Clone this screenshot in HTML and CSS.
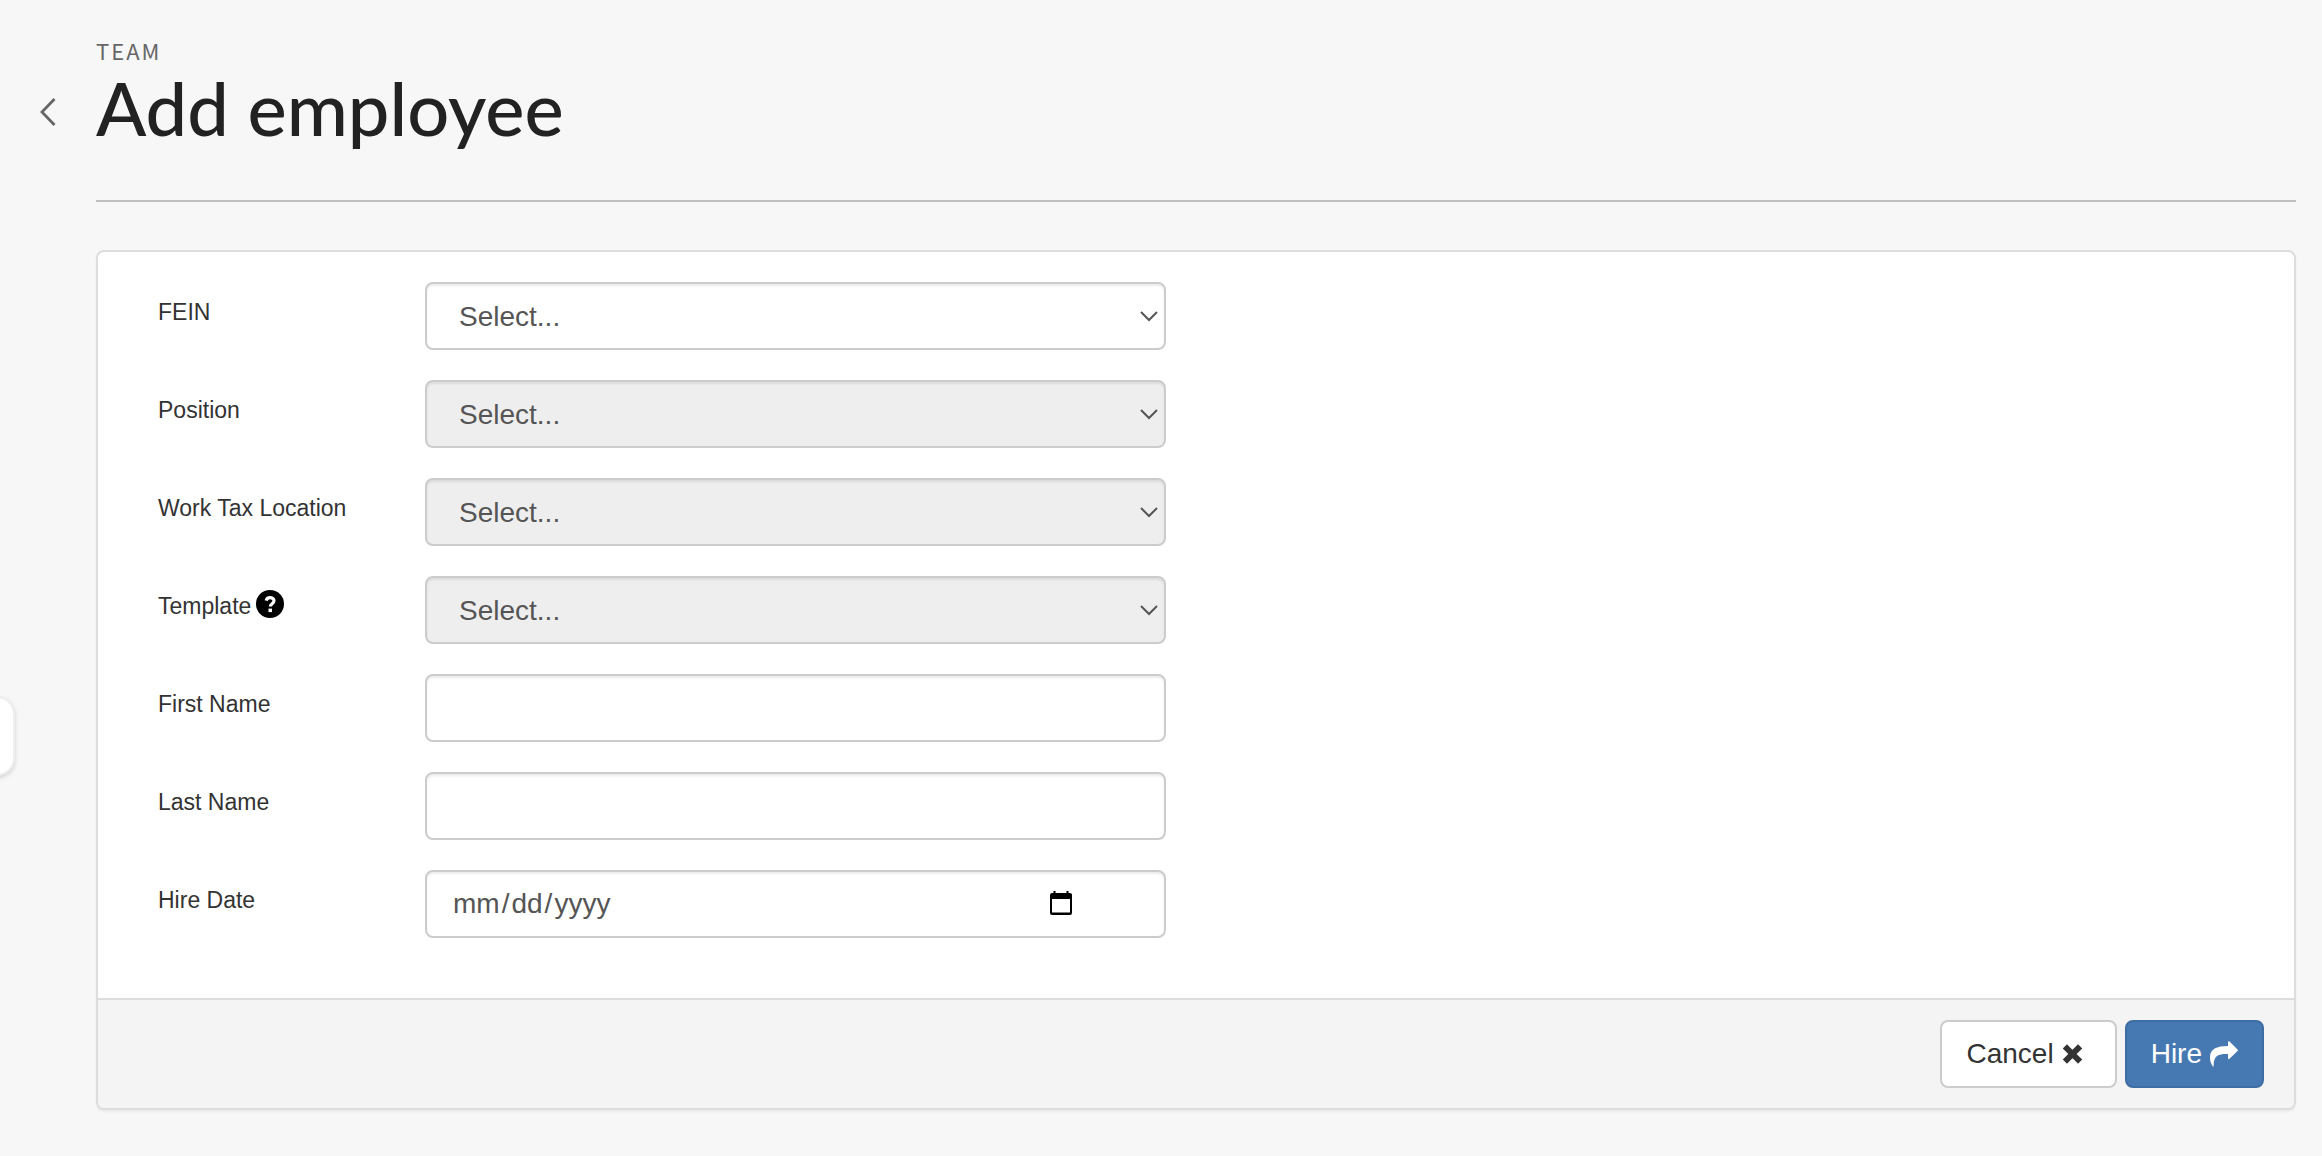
FILE: index.html
```html
<!DOCTYPE html>
<html lang="en">
<head>
    <meta charset="UTF-8">
    <meta name="viewport" content="width=device-width, initial-scale=1.0">
    <title>Add employee</title>
    <link rel="stylesheet" href="styles.css">
</head>
<body>
    <button type="button" class="side-tab" aria-label="Open menu"></button>
    <header class="page-header">
        <a href="#" class="back" aria-label="Back">
            <svg width="16" height="28" viewBox="0 0 16 28"><path d="M14.500 1 2 14l12.500 13" fill="none" stroke="#666" stroke-width="2.800"/></svg>
        </a>
        <div class="heading">
            <p class="section">TEAM</p>
            <h1>Add employee</h1>
        </div>
    </header>
    <main>
        <form class="panel">
            <div class="panel-body">
                <div class="form-row">
                    <label for="fein">FEIN</label>
                    <div class="field">
                        <select id="fein"><option>Select...</option></select>
                        <svg class="chevron" width="18" height="11" viewBox="0 0 18 11"><path d="M1 1l8 8 8-8" fill="none" stroke="#555" stroke-width="2"/></svg>
                    </div>
                </div>
                <div class="form-row">
                    <label for="position">Position</label>
                    <div class="field">
                        <select id="position" disabled><option>Select...</option></select>
                        <svg class="chevron" width="18" height="11" viewBox="0 0 18 11"><path d="M1 1l8 8 8-8" fill="none" stroke="#555" stroke-width="2"/></svg>
                    </div>
                </div>
                <div class="form-row">
                    <label for="location">Work Tax Location</label>
                    <div class="field">
                        <select id="location" disabled><option>Select...</option></select>
                        <svg class="chevron" width="18" height="11" viewBox="0 0 18 11"><path d="M1 1l8 8 8-8" fill="none" stroke="#555" stroke-width="2"/></svg>
                    </div>
                </div>
                <div class="form-row">
                    <label for="template">Template<svg class="help" width="28" height="28" viewBox="0 0 28 28"><circle cx="14" cy="14" r="14"/><path d="M10.200 10.600C10.600 8.600 12 7.600 14 7.600c2.300 0 4 1.300 4 3.200 0 2.800-3.700 2.900-3.700 5.700" fill="none" stroke="#fff" stroke-width="3.200"/><path d="M12.500 18.600h3.500v3.500h-3.500z" fill="#fff"/></svg></label>
                    <div class="field">
                        <select id="template" disabled><option>Select...</option></select>
                        <svg class="chevron" width="18" height="11" viewBox="0 0 18 11"><path d="M1 1l8 8 8-8" fill="none" stroke="#555" stroke-width="2"/></svg>
                    </div>
                </div>
                <div class="form-row">
                    <label for="first-name">First Name</label>
                    <div class="field"><input type="text" id="first-name"></div>
                </div>
                <div class="form-row">
                    <label for="last-name">Last Name</label>
                    <div class="field"><input type="text" id="last-name"></div>
                </div>
                <div class="form-row">
                    <label for="hire-date">Hire Date</label>
                    <div class="field">
                        <input type="date" id="hire-date">
                        <svg class="calendar" width="22" height="24" viewBox="0 0 22 24"><path d="M3.500 0h2v2h11V0h2v2H20a2 2 0 0 1 2 2v18a2 2 0 0 1-2 2H2a2 2 0 0 1-2-2V4a2 2 0 0 1 2-2h1.500zM2 8v13.500h18V8z" fill-rule="evenodd"/></svg>
                    </div>
                </div>
            </div>
            <div class="panel-footer">
                <button type="button" class="btn btn-cancel">Cancel
                    <svg width="21" height="20" viewBox="0 0 21 20"><path d="M5 4.500l11 11M16 4.500l-11 11" fill="none" stroke="#333" stroke-width="6" stroke-linecap="square"/></svg>
                </button>
                <button type="submit" class="btn btn-hire">Hire
                    <svg width="28" height="26" viewBox="0 0 28 26"><path d="M18 1.200c0-1 .8-1.300 1.500-.6l8 7.800c.6.500.6 1.100 0 1.600l-8 7.800c-.7.700-1.500.4-1.500-.6V13C9 12.800 3.500 14 3.600 25c0 .8-.6.900-.9.200C1 22.500 0 20 0 16.500 0 8 6.500 5 18 5z" fill="#fff"/></svg>
                </button>
            </div>
        </form>
    </main>
</body>
</html>
```
FILE: styles.css
```css
* {
    box-sizing: border-box;
}
body {
    font-family: "Liberation Sans", Arial, sans-serif;
    margin: 0;
    padding: 36px 26px 46px 96px;
    background-color: #f7f7f7;
    color: #333;
}
.side-tab {
    position: absolute;
    top: 696px;
    left: -30px;
    width: 45px;
    height: 80px;
    padding: 0;
    background-color: #fff;
    border: 2px solid #eee;
    border-radius: 18px;
    box-shadow: 0 2px 4px rgba(0, 0, 0, 0.15);
}
.page-header {
    position: relative;
    padding-bottom: 48px;
    border-bottom: 2px solid #bfbfbf;
}
.back {
    position: absolute;
    left: -56px;
    top: 62px;
}
.back svg {
    display: block;
}
.section {
    margin: 0;
    font-family: "Noto Sans CJK JP", "Noto Sans", sans-serif;
    font-size: 22px;
    line-height: 28px;
    letter-spacing: 2px;
    color: #666;
}
h1 {
    margin: 0;
    font-family: Lato, sans-serif;
    font-size: 74px;
    font-weight: 500;
    line-height: 88px;
    color: #222;
}
.panel {
    margin-top: 48px;
    background-color: #fff;
    border: 2px solid #ddd;
    border-radius: 8px;
    box-shadow: 0 2px 2px rgba(0, 0, 0, 0.05);
    overflow: hidden;
}
.panel-body {
    padding: 30px 30px 60px;
    display: flex;
    flex-direction: column;
    gap: 30px;
}
.form-row {
    display: grid;
    grid-template-columns: 1fr 3fr;
    width: 50%;
}
.form-row label {
    padding: 14px 0 0 30px;
    font-size: 23px;
    line-height: 32px;
    white-space: nowrap;
}
.help {
    margin-left: 5px;
    vertical-align: -4px;
}
.field {
    position: relative;
    margin: 0 30px;
}
.field input,
.field select {
    display: block;
    width: 100%;
    height: 68px;
    padding: 0 26px;
    font-family: inherit;
    font-size: 28px;
    color: #555;
    background-color: #fff;
    border: 2px solid #ccc;
    border-radius: 8px;
    box-shadow: inset 0 2px 2px rgba(0, 0, 0, 0.08);
    appearance: none;
}
.field select {
    padding: 0 32px;
}
.field select:disabled {
    background-color: #eee;
    opacity: 1;
}
.chevron {
    position: absolute;
    top: 29px;
    right: 8px;
    pointer-events: none;
}
.calendar {
    position: absolute;
    top: 21px;
    right: 94px;
    pointer-events: none;
}
.field input[type="date"] {
    padding: 0 90px 0 24px;
}
.field input::-webkit-calendar-picker-indicator {
    opacity: 0;
}
.field input::-webkit-datetime-edit-month-field,
.field input::-webkit-datetime-edit-day-field,
.field input::-webkit-datetime-edit-year-field {
    padding: 0 2px;
}
.panel-footer {
    display: flex;
    justify-content: flex-end;
    gap: 8px;
    padding: 20px 30px;
    background-color: #f4f4f4;
    border-top: 2px solid #ddd;
}
.btn {
    display: flex;
    align-items: center;
    gap: 8px;
    height: 68px;
    padding: 0 24px;
    font-family: inherit;
    font-size: 28px;
    border: 2px solid #ccc;
    border-radius: 8px;
    cursor: pointer;
}
.btn-cancel {
    padding-right: 32px;
    color: #333;
    background-color: #fff;
}
.btn-hire {
    color: #fff;
    background-color: #4679b2;
    border-color: #3e6da3;
}
```
